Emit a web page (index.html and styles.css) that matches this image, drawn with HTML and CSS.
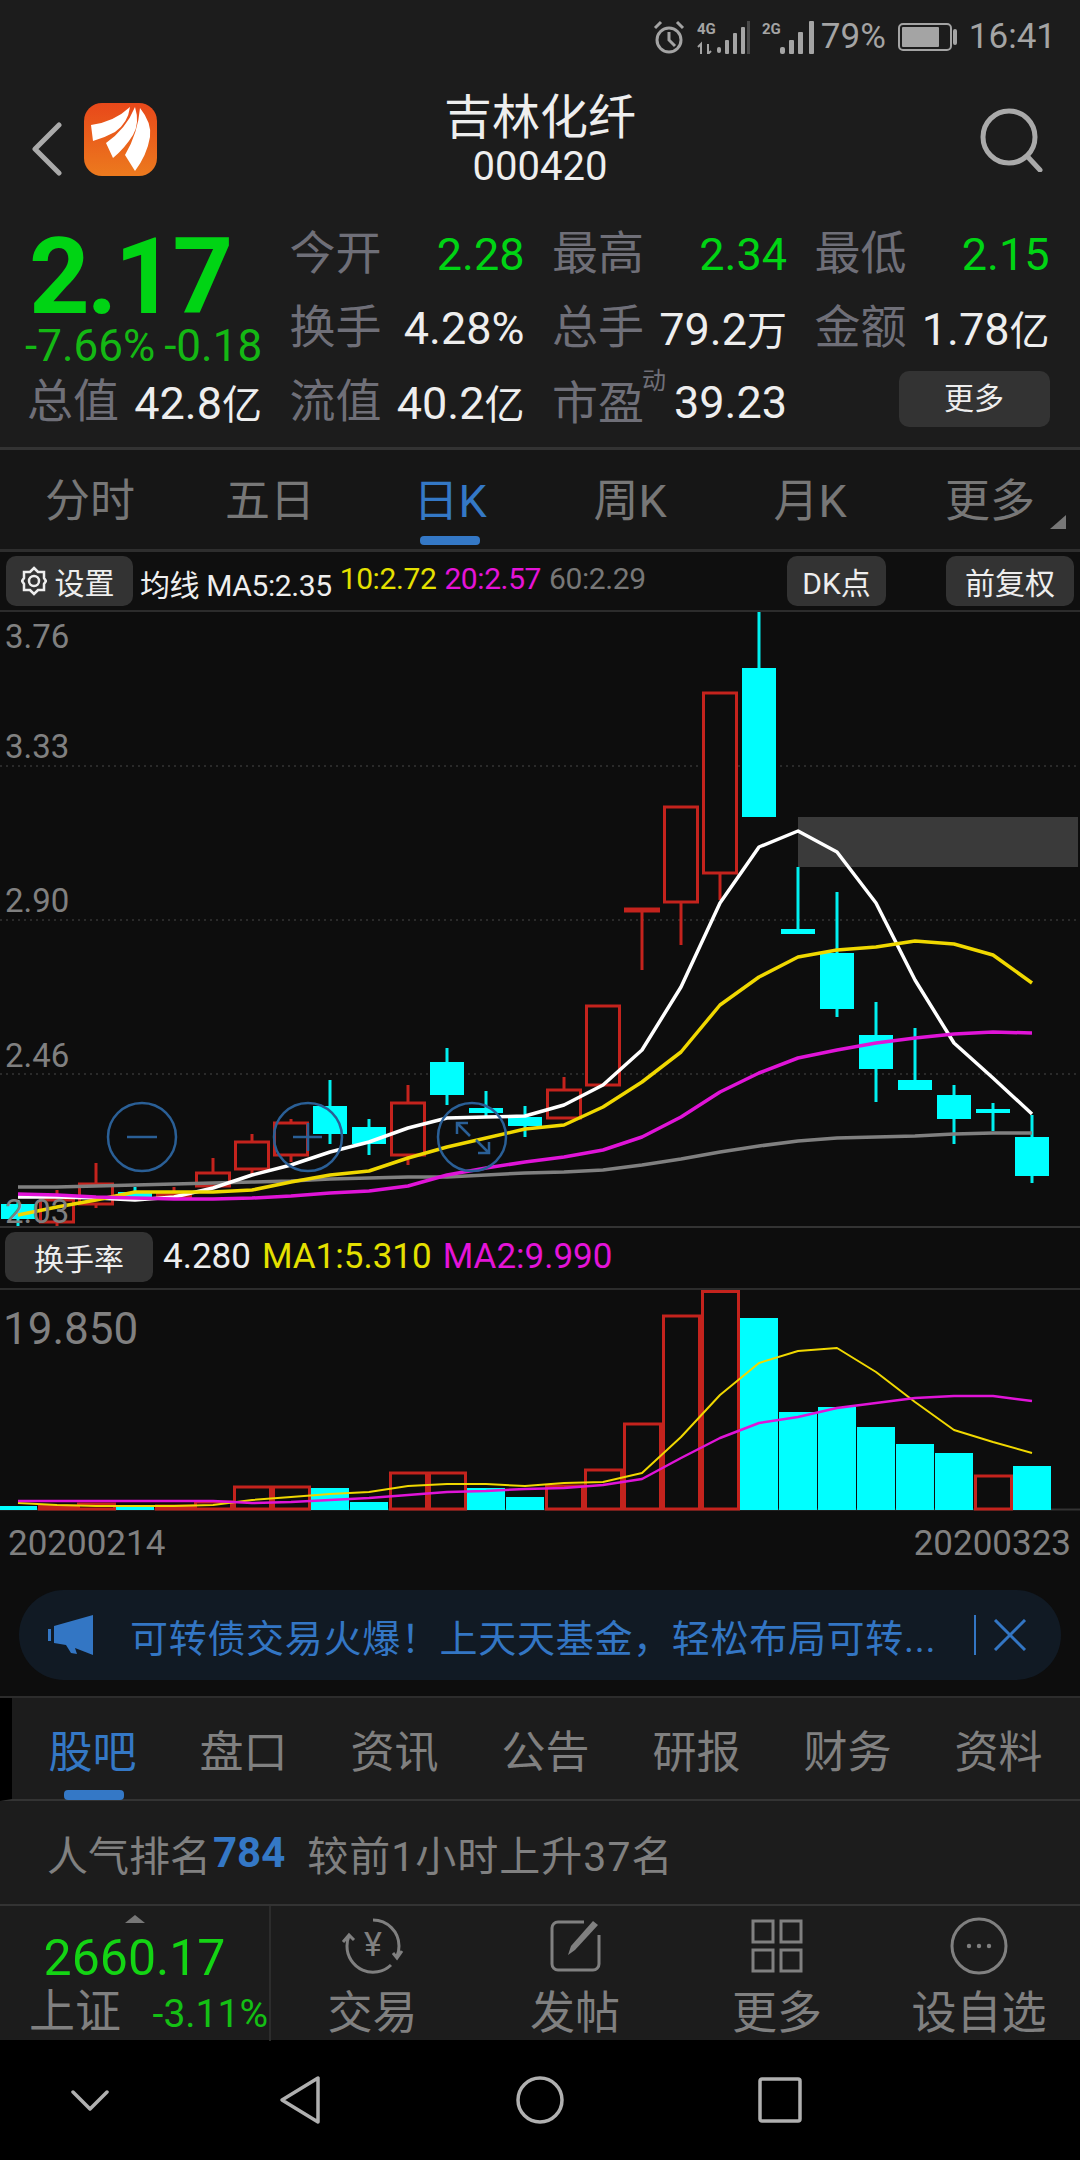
FILE: index.html
```html
<!DOCTYPE html>
<html lang="zh-CN">
<head>
  <meta charset="UTF-8">
  <meta name="viewport" content="width=device-width, initial-scale=1.0">
  <title>吉林化纤 000420</title>
  <link rel="stylesheet" href="styles.css">
</head>
<body>
  <div class="status">
    <svg class="ico-alarm" viewBox="0 0 32 34"><circle cx="16" cy="20" r="12"/><path d="M16 12V20L22 26M2 8L8 2M30 8L24 2"/></svg>
    <svg class="ico-signal" width="53" height="34" viewBox="0 0 53 34">
      <text x="0" y="14" class="net">4G</text>
      <path class="arrows" d="M4 34V24L1 27M11 24V34L14 31"/>
      <rect x="20" y="27" width="4" height="6" rx="2"/><rect x="28" y="20" width="4" height="14" rx="1"/><rect x="36" y="13" width="4" height="21" rx="1"/><rect x="44" y="7" width="4" height="27" rx="1"/><rect class="dim" x="50" y="1" width="3" height="33"/>
    </svg>
    <svg class="ico-signal" width="54" height="34" viewBox="0 0 54 34">
      <text x="0" y="14" class="net">2G</text>
      <rect x="18" y="27" width="5" height="7" rx="2"/><rect x="27" y="20" width="5" height="14" rx="1"/><rect x="36" y="12" width="5" height="22" rx="1"/><rect x="47" y="1" width="5" height="33" rx="1"/>
    </svg>
    <span class="batt-txt">79%</span>
    <svg class="ico-batt" width="59" height="28" viewBox="0 0 59 28"><rect class="shell" x="1" y="1" width="52" height="26" rx="4"/><rect x="4" y="4" width="37" height="20" rx="1"/><rect x="55" y="6" width="4" height="16" rx="2"/></svg>
    <span class="clock">16:41</span>
  </div>

  <header class="head">
    <div class="head-left">
      <svg class="ico-back" width="30" height="54" viewBox="0 0 30 54"><path d="M27 3L3 27L27 51"/></svg>
      <svg class="logo" width="73" height="73" viewBox="0 0 73 73">
        <defs><linearGradient id="logoBg" x1="0" y1="0" x2="0" y2="1"><stop offset="0" stop-color="#e8481a"/><stop offset="1" stop-color="#ec7a1e"/></linearGradient></defs>
        <rect width="73" height="73" rx="18" fill="url(#logoBg)"/>
        <path fill="#fff" d="M7 22Q30 19 46 4Q44 20 31 29Q20 35 9 38Z"/>
        <path fill="#fff" d="M22 40Q42 26 51 4Q56 20 49 32Q41 45 29 55Z"/>
        <path fill="#fff" d="M41 52Q54 30 56 5Q68 20 66 34Q63 52 51 68Z"/>
      </svg>
    </div>
    <div class="head-title">
      <div class="name">吉林化纤</div>
      <div class="code">000420</div>
    </div>
    <svg class="ico-search" width="64" height="64" viewBox="0 0 64 64"><circle cx="29" cy="29" r="26"/><path d="M47 48L60 62"/></svg>
  </header>

  <section class="quote">
    <div class="price-box">
      <div class="price">2.17</div>
      <div class="change"><span>-7.66%</span><span>-0.18</span></div>
    </div>
    <div class="stat"><span class="lbl">今开</span><span class="green">2.28</span></div>
    <div class="stat"><span class="lbl">最高</span><span class="green">2.34</span></div>
    <div class="stat"><span class="lbl">最低</span><span class="green">2.15</span></div>
    <div class="stat"><span class="lbl">换手</span><span>4.28%</span></div>
    <div class="stat"><span class="lbl">总手</span><span>79.2<span class="unit">万</span></span></div>
    <div class="stat"><span class="lbl">金额</span><span>1.78<span class="unit">亿</span></span></div>
    <div class="stat"><span class="lbl">总值</span><span>42.8<span class="unit">亿</span></span></div>
    <div class="stat"><span class="lbl">流值</span><span>40.2<span class="unit">亿</span></span></div>
    <div class="stat"><span class="lbl">市盈<span class="dyn">动</span></span><span>39.23</span></div>
    <div class="more-btn">更多</div>
  </section>

  <nav class="periods">
    <div>分时</div>
    <div>五日</div>
    <div class="on">日K</div>
    <div>周K</div>
    <div>月K</div>
    <div class="has-menu">更多</div>
  </nav>

  <div class="toolbar">
    <div class="chip chip-set">
      <svg width="26" height="30" viewBox="0 0 26 30"><path d="M13 2L17 6L23 6L23 12L25 15L23 18L23 24L17 24L13 28L9 24L3 24L3 18L1 15L3 12L3 6L9 6Z"/><circle cx="13" cy="15" r="5"/></svg>
      <span>设置</span>
    </div>
    <div class="ma-line"><span>均线 MA5:2.35</span><span class="yellow">10:2.72</span><span class="pink">20:2.57</span><span class="grey">60:2.29</span></div>
    <div class="chip chip-dk">DK点</div>
    <div class="chip chip-fq">前复权</div>
  </div>

  <div class="kline">
    <svg class="kline-svg" width="1080" height="614" viewBox="0 612 1080 614">
      <path class="grid" d="M0 766H1080M0 920H1080M0 1074H1080"/>
      <rect class="shade" x="798" y="817" width="280" height="50"/>

      <path class="wick-r" d="M57 1190V1226M96 1163V1208M174 1187V1199M213 1158V1187M252 1134V1175M291 1119V1162M408 1085V1165M564 1077V1119M642 909V970M681 806V945M720 692V900"/>
      <path class="wick-c" d="M18 1200V1227M135 1187V1197M330 1080V1144M369 1119V1155M447 1048V1105M486 1091V1117M525 1106V1137M759 612V668M798 867V934M837 892V1017M876 1002V1102M915 1028V1090M954 1085V1144M993 1103V1131M1032 1115V1183"/>

      <g class="body-r">
        <rect x="40.5" y="1200" width="33" height="22"/>
        <rect x="79.5" y="1184" width="33" height="20"/>
        <rect x="157.5" y="1194" width="33" height="3"/>
        <rect x="196.5" y="1173" width="33" height="13"/>
        <rect x="235.5" y="1142" width="33" height="27"/>
        <rect x="274.5" y="1123" width="33" height="32"/>
        <rect x="391.5" y="1103" width="33" height="52"/>
        <rect x="547.5" y="1090" width="33" height="28"/>
        <rect x="586.5" y="1006" width="33" height="79"/>
        <rect x="625.5" y="909" width="33" height="2"/>
        <rect x="664.5" y="807" width="33" height="95"/>
        <rect x="703.5" y="693" width="33" height="180"/>
      </g>
      <g class="body-c">
        <rect x="1" y="1204" width="34" height="15"/>
        <rect x="118" y="1192" width="34" height="5"/>
        <rect x="313" y="1106" width="34" height="28"/>
        <rect x="352" y="1127" width="34" height="17"/>
        <rect x="430" y="1062" width="34" height="33"/>
        <rect x="469" y="1108" width="34" height="5"/>
        <rect x="508" y="1117" width="34" height="9"/>
        <rect x="742" y="668" width="34" height="149"/>
        <rect x="781" y="929" width="34" height="5"/>
        <rect x="820" y="953" width="34" height="56"/>
        <rect x="859" y="1035" width="34" height="34"/>
        <rect x="898" y="1080" width="34" height="10"/>
        <rect x="937" y="1095" width="34" height="24"/>
        <rect x="976" y="1109" width="34" height="4"/>
        <rect x="1015" y="1137" width="34" height="39"/>
      </g>

      <polyline class="ln ln-grey" points="18,1187 57,1187 96,1186 135,1185 174,1184 213,1183 252,1182 291,1181 330,1179 369,1178 408,1177 447,1177 486,1175 525,1173 564,1172 603,1170 642,1165 681,1159 720,1152 759,1146 798,1141 837,1138 876,1137 915,1136 954,1134 993,1133 1032,1133"/>
      <polyline class="ln ln-white" points="18,1197 57,1197 96,1198 135,1200 174,1197 213,1188 252,1175 291,1165 330,1152 369,1142 408,1128 447,1118 486,1117 525,1116 564,1105 603,1085 642,1050 681,987 720,903 759,847 798,831 837,852 876,903 915,980 954,1043 993,1078 1032,1114"/>
      <polyline class="ln ln-yellow" points="18,1215 57,1207 96,1200 135,1192 174,1192 213,1192 252,1190 291,1182 330,1175 369,1171 408,1158 447,1147 486,1138 525,1129 564,1125 603,1107 642,1082 681,1052 720,1005 759,977 798,957 837,950 876,947 915,941 954,944 993,955 1032,983"/>
      <polyline class="ln ln-pink" points="18,1194 57,1195 96,1197 135,1198 174,1199 213,1199 252,1198 291,1196 330,1193 369,1191 408,1186 447,1175 486,1168 525,1162 564,1157 603,1150 642,1137 681,1117 720,1092 759,1073 798,1058 837,1050 876,1043 915,1038 954,1034 993,1032 1032,1033"/>

      <g class="zoom-btn">
        <circle cx="142" cy="1137" r="34"/>
        <path d="M127 1137H157"/>
        <circle cx="308" cy="1137" r="34"/>
        <path d="M293 1137H322M308 1123V1151"/>
        <circle cx="472" cy="1137" r="34"/>
        <path d="M457 1134V1123H468M457 1123L470 1136M489 1142V1153H478M489 1153L476 1140"/>
      </g>
    </svg>
    <span class="axis a1">3.76</span>
    <span class="axis a2">3.33</span>
    <span class="axis a3">2.90</span>
    <span class="axis a4">2.46</span>
    <span class="axis a5">2.03</span>
  </div>

  <div class="toolbar toolbar-vol">
    <div class="chip chip-hs">换手率</div>
    <div class="vol-line"><span>4.280</span><span class="yellow">MA1:5.310</span><span class="pink">MA2:9.990</span></div>
  </div>

  <div class="vol">
    <svg class="vol-svg" width="1080" height="222" viewBox="0 1290 1080 222">
      <path class="vol-base" d="M0 1509.5H1080"/>
      <g class="body-c">
        <rect x="-1" y="1506" width="38" height="4"/>
        <rect x="116" y="1505" width="38" height="5"/>
        <rect x="311" y="1488" width="38" height="22"/>
        <rect x="350" y="1502" width="38" height="8"/>
        <rect x="467" y="1488" width="38" height="22"/>
        <rect x="506" y="1497" width="38" height="13"/>
        <rect x="740" y="1318" width="38" height="192"/>
        <rect x="779" y="1412" width="38" height="98"/>
        <rect x="818" y="1407" width="38" height="103"/>
        <rect x="857" y="1427" width="38" height="83"/>
        <rect x="896" y="1444" width="38" height="66"/>
        <rect x="935" y="1453" width="38" height="57"/>
        <rect x="1013" y="1466" width="38" height="44"/>
      </g>
      <g class="body-r body-v">
        <rect x="39.5" y="1506" width="36" height="3"/>
        <rect x="78.5" y="1504" width="36" height="5"/>
        <rect x="156.5" y="1506" width="36" height="3"/>
        <rect x="195.5" y="1502" width="36" height="7"/>
        <rect x="234.5" y="1487" width="36" height="22"/>
        <rect x="273.5" y="1487" width="36" height="22"/>
        <rect x="390.5" y="1473" width="36" height="36"/>
        <rect x="429.5" y="1473" width="36" height="36"/>
        <rect x="546.5" y="1486" width="36" height="23"/>
        <rect x="585.5" y="1470" width="36" height="39"/>
        <rect x="624.5" y="1424" width="36" height="85"/>
        <rect x="663.5" y="1316" width="36" height="193"/>
        <rect x="702.5" y="1291.5" width="36" height="217.5"/>
        <rect x="975.5" y="1476" width="36" height="33"/>
      </g>
      <polyline class="ln-thin ln-yellow" points="18,1503 57,1505 96,1506 135,1506 174,1506 213,1505 252,1500 291,1497 330,1494 369,1492 408,1486 447,1484 486,1484 525,1486 564,1483 603,1482 642,1473 681,1437 720,1395 759,1363 798,1351 837,1348 876,1372 915,1402 954,1430 993,1442 1032,1453"/>
      <polyline class="ln-mid ln-pink" points="18,1501 57,1501 96,1501 135,1501 174,1501 213,1501 252,1503 291,1502 330,1500 369,1498 408,1495 447,1492 486,1491 525,1489 564,1488 603,1485 642,1479 681,1458 720,1438 759,1423 798,1417 837,1408 876,1403 915,1398 954,1396 993,1396 1032,1401"/>
    </svg>
    <span class="axis vol-max">19.850</span>
    <div class="dates"><span>20200214</span><span>20200323</span></div>
  </div>

  <div class="banner-wrap">
    <div class="banner">
      <svg class="ico-horn" width="45" height="40" viewBox="0 0 45 40"><path d="M0 14H3V26H0ZM6 11L45 0V40L27 33L29 39L23 38L18 30L6 28Z"/></svg>
      <span class="banner-txt">可转债交易火爆！上天天基金，轻松布局可转...</span>
      <i class="banner-sep"></i>
      <svg class="ico-close" width="34" height="32" viewBox="0 0 34 32"><path d="M2 1L32 31M32 1L2 31"/></svg>
    </div>
  </div>

  <nav class="subtabs">
    <div class="on">股吧</div>
    <div>盘口</div>
    <div>资讯</div>
    <div>公告</div>
    <div>研报</div>
    <div>财务</div>
    <div>资料</div>
  </nav>

  <div class="rank"><span>人气排名</span><b>784</b><span class="rank-note">较前1小时上升37名</span></div>

  <footer class="bottom">
    <div class="index-box">
      <i class="index-up"></i>
      <div class="index-val">2660.17</div>
      <div class="index-row"><span class="index-name">上证</span><span class="index-pct">-3.11%</span></div>
    </div>
    <div class="action">
      <svg width="64" height="56" viewBox="0 0 64 56">
        <path d="M32 2A26 26 0 0 1 58 28Q58 34 56 38M50 47A26 26 0 0 1 6 28Q6 22 8 18M2 24L8 17L13 22M52 35L56 40L61 33"/>
        <text class="yen" x="32" y="38" text-anchor="middle">¥</text>
      </svg>
      <span>交易</span>
    </div>
    <div class="action">
      <svg width="53" height="54" viewBox="0 0 53 54">
        <path d="M35 3H9A6 6 0 0 0 3 9V45A6 6 0 0 0 9 51H44A6 6 0 0 0 50 45V16"/>
        <path class="solid" d="M19 36L22 27L44 2L49 6L26 31Z"/>
      </svg>
      <span>发帖</span>
    </div>
    <div class="action">
      <svg width="52" height="54" viewBox="0 0 52 54">
        <rect x="2" y="2" width="20" height="21"/><rect x="30" y="2" width="20" height="21"/><rect x="2" y="31" width="20" height="21"/><rect x="30" y="31" width="20" height="21"/>
      </svg>
      <span>更多</span>
    </div>
    <div class="action">
      <svg width="58" height="58" viewBox="0 0 58 58">
        <circle cx="29" cy="29" r="27"/>
        <circle class="solid" cx="19" cy="29" r="2.2"/><circle class="solid" cx="29" cy="29" r="2.2"/><circle class="solid" cx="39" cy="29" r="2.2"/>
      </svg>
      <span>设自选</span>
    </div>
  </footer>

  <div class="sysnav">
    <svg width="38" height="21" viewBox="0 0 38 21"><path d="M2 2L19 19L36 2"/></svg>
    <svg width="42" height="50" viewBox="0 0 42 50"><path d="M39 3V47L3 25Z"/></svg>
    <svg width="48" height="50" viewBox="0 0 48 50"><circle cx="24" cy="25" r="22"/></svg>
    <svg width="44" height="46" viewBox="0 0 44 46"><rect x="2" y="2" width="40" height="42" rx="2"/></svg>
  </div>
</body>
</html>
```

FILE: styles.css
```css
* {
  margin: 0;
  padding: 0;
  box-sizing: border-box;
}
body {
  font-family: Roboto, "Noto Sans CJK SC", sans-serif;
  background: #1c1c1c;
  color: #eee;
  width: 1080px;
  height: 2160px;
  overflow: hidden;
}
svg {
  display: block;
  flex: none;
}

/* status bar */
.status {
  height: 70px;
  display: flex;
  justify-content: flex-end;
  align-items: center;
  gap: 12px;
  padding: 4px 24px 0 0;
  color: #a4a4a4;
}
.ico-alarm {
  width: 32px;
  height: 34px;
  fill: none;
  stroke: #a4a4a4;
  stroke-width: 3;
}
.ico-signal {
  fill: #a4a4a4;
}
.ico-signal .dim {
  fill: #4a4a4a;
}
.ico-signal .arrows {
  fill: none;
  stroke: #a4a4a4;
  stroke-width: 2;
}
.net {
  font-size: 15px;
  font-weight: 700;
}
.batt-txt {
  font-size: 35px;
  margin-left: -7px;
  line-height: 36px;
}
.clock {
  font-size: 35px;
  line-height: 36px;
}
.ico-batt {
  fill: #a4a4a4;
}
.ico-batt .shell {
  fill: none;
  stroke: #a4a4a4;
  stroke-width: 2;
}

/* header */
.head {
  height: 147px;
  display: grid;
  grid-template-columns: 300px 1fr 300px;
  padding-top: 23px;
}
.head-left {
  display: flex;
  align-items: flex-start;
  gap: 22px;
  padding: 10px 0 0 32px;
}
.ico-back {
  margin-top: 19px;
  fill: none;
  stroke: #aaa;
  stroke-width: 5;
  stroke-linecap: round;
  stroke-linejoin: round;
}
.head-title {
  text-align: center;
}
.name {
  font-size: 48px;
  line-height: 50px;
  color: #eee;
}
.code {
  font-size: 40px;
  line-height: 48px;
  color: #eee;
}
.ico-search {
  justify-self: end;
  margin: 15px 36px 0 0;
  fill: none;
  stroke: #aaa;
  stroke-width: 5;
  stroke-linecap: round;
}

/* quote */
.quote {
  height: 233px;
  display: grid;
  grid-template-columns: repeat(4, 233px);
  grid-template-rows: repeat(3, 74px);
  column-gap: 29.5px;
  padding-left: 29px;
  font-size: 45px;
  border-bottom: 3px solid #333;
}
.price-box {
  grid-row: 1 / span 2;
  color: #00d414;
}
.price {
  height: 110px;
  padding-top: 10px;
  font-size: 106px;
  font-weight: 700;
  line-height: 100px;
  letter-spacing: -3px;
}
.change {
  display: flex;
  gap: 9px;
  margin-left: -4px;
  font-size: 44px;
  line-height: 38px;
  white-space: nowrap;
  color: #14b814;
}
.stat {
  display: flex;
  justify-content: space-between;
  align-items: center;
  white-space: nowrap;
}
.lbl {
  margin: 0 0 2px -2px;
  font-size: 46px;
  line-height: 60px;
  color: #6f6f78;
}
.unit {
  font-size: 40px;
}
.green {
  color: #00d414;
}
.dyn {
  font-size: 24px;
  line-height: 24px;
  vertical-align: 30px;
  margin-left: -2px;
}
.more-btn {
  justify-self: end;
  align-self: start;
  width: 151px;
  height: 56px;
  margin-top: 6px;
  background: #333;
  border-radius: 10px;
  font-size: 30px;
  line-height: 56px;
  text-align: center;
}

/* period tabs */
.periods {
  height: 102px;
  display: grid;
  grid-template-columns: repeat(6, 180px);
  background: #161616;
  border-bottom: 3px solid #2e2e2e;
}
.periods div {
  position: relative;
  font-size: 45px;
  line-height: 104px;
  text-align: center;
  color: #777;
}
.periods .on {
  color: #3478c6;
}
.periods .on::after {
  content: "";
  position: absolute;
  left: 60px;
  bottom: 9px;
  width: 60px;
  height: 9px;
  border-radius: 4px;
  background: #3478c6;
}
.has-menu::after {
  content: "";
  position: absolute;
  right: 14px;
  top: 65px;
  border-left: 16px solid transparent;
  border-bottom: 14px solid #777;
}

/* toolbars */
.toolbar {
  height: 60px;
  display: flex;
  align-items: center;
  background: #0f0f0f;
  border-bottom: 2px solid #2c2c2c;
  padding: 0 6px;
}
.chip {
  height: 50px;
  flex: none;
  display: flex;
  align-items: center;
  justify-content: center;
  background: #333;
  border-radius: 10px;
  font-size: 30px;
  color: #eee;
}
.chip-set {
  width: 127px;
  gap: 8px;
  padding-right: 4px;
}
.chip-set svg {
  fill: none;
  stroke: #eee;
  stroke-width: 2.5;
}
.ma-line {
  display: flex;
  gap: 8px;
  margin-left: 7px;
  padding-top: 3px;
  font-size: 30px;
  white-space: nowrap;
  letter-spacing: -.4px;
}
.chip-dk {
  width: 99px;
  margin-left: auto;
}
.chip-fq {
  width: 128px;
  margin-left: 60px;
}
.yellow {
  color: #e4e000;
}
.pink {
  color: #e414d8;
}
.grey {
  color: #777;
}

/* k line chart */
.kline {
  position: relative;
  height: 616px;
  background: #0d0d0d;
  border-bottom: 2px solid #333;
}
.grid {
  stroke: #2a2a2a;
  stroke-width: 2;
  stroke-dasharray: 2 4;
}
.shade {
  fill: #3a3a3a;
}
.wick-r {
  stroke: #c4231d;
  stroke-width: 3;
  fill: none;
}
.wick-c {
  stroke: #00f0f0;
  stroke-width: 3;
  fill: none;
}
.body-r rect {
  fill: #0d0d0d;
  stroke: #c4231d;
  stroke-width: 3;
}
.body-v rect {
  fill: none;
}
.body-c rect {
  fill: #00ffff;
}
.ln {
  fill: none;
  stroke-width: 3.5;
  stroke-linejoin: round;
}
.ln-thin {
  fill: none;
  stroke-width: 2;
  stroke-linejoin: round;
}
.ln-mid {
  fill: none;
  stroke-width: 2.5;
  stroke-linejoin: round;
}
.ln-grey {
  stroke: #808080;
}
.ln-white {
  stroke: #fff;
}
.ln-yellow {
  stroke: #f0d800;
}
.ln-pink {
  stroke: #e014d8;
}
.zoom-btn {
  fill: none;
  stroke: #2a5f96;
  stroke-width: 2.5;
}
.axis {
  position: absolute;
  left: 5px;
  font-size: 33px;
  line-height: 40px;
  color: #808080;
}
.a1 { top: 5px; }
.a2 { top: 115px; }
.a3 { top: 269px; }
.a4 { top: 424px; }
.a5 { top: 580px; }

/* turnover chart */
.toolbar-vol {
  height: 62px;
  background: #0d0d0d;
  padding: 0 5px 3px;
}
.chip-hs {
  width: 148px;
}
.vol-line {
  display: flex;
  gap: 11px;
  margin-left: 10px;
  font-size: 35px;
  white-space: nowrap;
}
.vol {
  position: relative;
  background: #0d0d0d;
}
.vol-base {
  stroke: #333;
  stroke-width: 2;
}
.vol-max {
  top: 14px;
  left: 3px;
  font-size: 44px;
  line-height: 50px;
}
.dates {
  display: flex;
  justify-content: space-between;
  height: 78px;
  padding: 0 9px 0 8px;
  font-size: 35px;
  line-height: 64px;
  color: #808080;
}

/* banner */
.banner-wrap {
  background: #0d0d0d;
  padding: 0 19px 16px;
  border-bottom: 2px solid #2c2c2c;
}
.banner {
  height: 90px;
  display: flex;
  align-items: center;
  padding-left: 29px;
  border-radius: 45px;
  background: #111a24;
  color: #3376c4;
}
.ico-horn {
  fill: #3376c4;
}
.banner-txt {
  width: 810px;
  margin-left: 37px;
  font-size: 38px;
  letter-spacing: .7px;
  white-space: nowrap;
}
.banner-sep {
  width: 2px;
  height: 40px;
  margin-left: 34px;
  background: #3376c4;
}
.ico-close {
  margin-left: 17px;
  fill: none;
  stroke: #3376c4;
  stroke-width: 3;
}

/* sub tabs */
.subtabs {
  height: 103px;
  display: grid;
  grid-template-columns: repeat(7, 151px);
  padding-left: 8px;
  border-left: 12px solid #000;
  border-bottom: 2px solid #333;
  font-size: 44px;
  line-height: 110px;
  text-align: center;
  color: #808080;
}
.subtabs div {
  position: relative;
  margin-left: -6px;
}
.subtabs .on {
  color: #3478c6;
}
.subtabs .on::after {
  content: "";
  position: absolute;
  left: 50px;
  bottom: 8px;
  width: 60px;
  height: 10px;
  border-radius: 4px;
  background: #3478c6;
}

/* rank row */
.rank {
  height: 105px;
  display: flex;
  align-items: center;
  padding-left: 47px;
  font-size: 41px;
  color: #808080;
  border-bottom: 2px solid #333;
}
.rank b {
  font-size: 42px;
  color: #3478c6;
  margin-left: 2px;
}
.rank-note {
  margin-left: 22px;
  letter-spacing: 1px;
}

/* bottom bar */
.bottom {
  height: 134px;
  display: grid;
  grid-template-columns: 271px 203px 202px 202px 202px;
}
.index-box {
  position: relative;
  border-right: 2px solid #2c2c2c;
  padding-top: 26px;
  text-align: center;
}
.index-up {
  position: absolute;
  left: 125px;
  top: 9px;
  border-left: 10px solid transparent;
  border-right: 10px solid transparent;
  border-bottom: 8px solid #777;
}
.index-val {
  font-size: 50px;
  line-height: 52px;
  color: #14d414;
}
.index-row {
  display: flex;
  align-items: baseline;
  justify-content: space-between;
  padding: 0 1px 0 29px;
  line-height: 54px;
}
.index-name {
  font-size: 46px;
  color: #808080;
}
.index-pct {
  font-size: 39px;
  color: #14c014;
}
.action {
  display: flex;
  flex-direction: column;
  align-items: center;
  padding-top: 11px;
  font-size: 45px;
  color: #808080;
}
.action span {
  margin-top: 14px;
  line-height: 50px;
  white-space: nowrap;
}
.action svg {
  height: 58px;
  fill: none;
  stroke: #808080;
  stroke-width: 3;
}
.action svg .solid {
  fill: #808080;
  stroke: none;
}
.yen {
  font-size: 34px;
  fill: #808080;
  stroke: none;
}

/* android nav */
.sysnav {
  height: 120px;
  background: #000;
  display: grid;
  grid-template-columns: 180px 240px 240px 240px;
  justify-items: center;
  align-items: center;
}
.sysnav svg {
  fill: none;
  stroke: #b0b0b0;
  stroke-width: 3.5;
  stroke-linejoin: round;
  stroke-linecap: round;
}
```
